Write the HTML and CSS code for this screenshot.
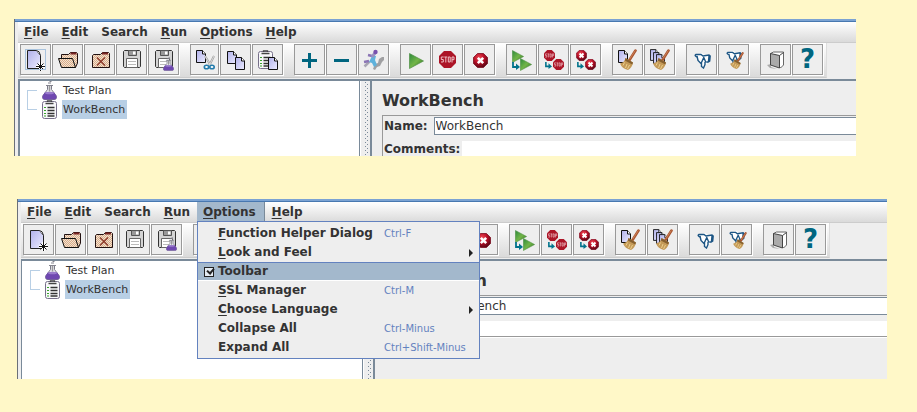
FILE: index.html
```html
<!DOCTYPE html>
<html lang="en">
<head>
<meta charset="utf-8">
<title>WorkBench</title>
<link rel="stylesheet" href="styles.css">
</head>
<body>
<svg class="sprite" aria-hidden="true">
  <defs>
    <linearGradient id="lilac" x1="0" y1="0" x2="1" y2="1"><stop offset="0" stop-color="#b0b0ea"/><stop offset="1" stop-color="#ececff"/></linearGradient>
    <linearGradient id="green" x1="0" y1="0" x2="1" y2="1"><stop offset="0" stop-color="#2c8a3c"/><stop offset=".5" stop-color="#72b548"/><stop offset="1" stop-color="#2c6e20"/></linearGradient>
    <radialGradient id="red" cx=".4" cy=".3" r=".7"><stop offset="0" stop-color="#f04a55"/><stop offset=".55" stop-color="#b40d25"/><stop offset="1" stop-color="#5c0716"/></radialGradient>
    <pattern id="tan" width="2" height="2" patternUnits="userSpaceOnUse"><rect width="2" height="2" fill="#f3e2d0"/><rect width="1" height="1" fill="#d8ac8a"/><rect x="1" y="1" width="1" height="1" fill="#d8ac8a"/></pattern>
    <symbol id="page" viewBox="0 0 10 13"><path d="M.5.5h6l3 3.500v8.500h-9z" fill="url(#lilac)" stroke="#111"/><path d="M6.500.5v3.500h3" fill="#fff" stroke="#111"/></symbol>
    <symbol id="flask" viewBox="0 0 15 19"><path d="M5.500 4.500v4L1 14.500q-1.500 4 2 4h9q3.500 0 2-4L9.500 8.500v-4z" fill="#e9e9f0" stroke="#7b7b88"/><path d="M2.800 11.500h9.400l2.300 3.500q.5 3.500-2.500 3.500H3Q0 18.500.5 15z" fill="#6f48b0"/><ellipse cx="7.500" cy="12" rx="4.500" ry="1.300" fill="#9a7ccc"/><path d="M4 4.500h7M6 2h3M7.500.5h2" stroke="#84848e" fill="none"/><path d="M7.500 5v5.500" stroke="#999" stroke-width="1.500"/></symbol>
    <symbol id="clip" viewBox="0 0 15 19"><rect x=".5" y="1.500" width="14" height="17" rx="2" fill="#f8f8fa" stroke="#77708a"/><path d="M3.500 3.500h8M5.500 2V.8h4V2" stroke="#444" stroke-width="1.300" fill="none"/><path d="M5.500 7.500h7M5.500 10.500h7M5.500 13.500h7M5.500 16h7" stroke="#333" stroke-width="1.300"/><path d="M2 7.500h2M2 10.500h2M2 13.500h2M2 16h2" stroke="#37a32a"/></symbol>
    <symbol id="disk" viewBox="0 0 18 18"><path d="M.5 1.500l1-1h15l1 1v15l-1 1h-15l-1-1z" fill="#d4d4d4" stroke="#333"/><path d="M5.500.5h8v5h-8z" fill="#999" stroke="#555"/><path d="M10 1.500h2.500v3H10z" fill="#fff"/><path d="M3.500 8.500h11v9h-11z" fill="#fff" stroke="#666"/><path d="M5 11.500h8M5 14.500h8" stroke="#bbb"/></symbol>
    <symbol id="broom" viewBox="0 0 17 21"><path d="M15.500 1.500L9.500 11" stroke="#a9552f" stroke-width="2.600" stroke-linecap="round"/><path d="M15.300 1.500L9.700 10" stroke="#d58b62" stroke-width=".8"/><path d="M5.500 9l7.500 4.500q-1 5.500-5 7.500Q2 19.500 0 14.500 4.500 13.500 5.500 9z" fill="#c49a58"/><path d="M5.500 9l7.500 4.500-.7 2-7.500-4z" fill="#86602f"/><path d="M4.500 13.500l-1.500 3M7 15l-1.500 4M9.500 16l-2 4" stroke="#ecd08d"/></symbol>
    <symbol id="glass" viewBox="0 0 17 17"><path d="M2.500 5.500L1 3.500 3 2.500l5-1.500 3 2h5v6l-2.500 1.500-3 5-2 .5L7 11 4 7z" fill="#fff"/><path d="M3 5Q0 3.500 2 2.500h5l2 1.500 6-1 1.200 1-.5 5-2.200 1.500M3 4l1 4.500 3 3L10 5M10 6l1.500 3.500q2 1.500 3-.5l.5-5M7.500 11v3.500l2 1.500 1.500-3.500V10" fill="none" stroke="#1c5584" stroke-width="1.400"/></symbol>
    <symbol id="bend" viewBox="0 0 8 8"><path d="M1 0v5h4" fill="none" stroke="#00738c" stroke-width="1.800"/><path d="M4 1.500l4 3.500-4 3z" fill="#00738c"/></symbol>
    <symbol id="tri" viewBox="0 0 15 16"><path d="M.5.5l14 7.500-14 7.500z" fill="url(#green)" stroke="#4f8f45" stroke-width=".7"/></symbol>
    <symbol id="stopsign" viewBox="0 0 17 17"><path d="M5 0h7l5 5v7l-5 5H5l-5-5V5z" fill="#ac1527"/><path d="M4.700 6H2.300v2.500h2v2.500H2M5.300 6h3M6.800 6v5.500M9.300 6h1.900v5H9.300zM13 11.500V6h2v2.700h-2" fill="none" stroke="#eec0c5"/></symbol>
    <symbol id="kill" viewBox="0 0 15 15"><path d="M4.500.5h6l4 4v6l-4 4h-6l-4-4v-6z" fill="url(#red)" stroke="#7c0c20" stroke-width=".8"/><path d="M4.800 4.800l5.400 5.400M10.200 4.800l-5.400 5.400" stroke="#fff" stroke-width="2.600"/></symbol>

    <symbol id="i-new" viewBox="0 0 29 29"><path d="M6.500 5.500h9l4 5v13h-13z" fill="url(#lilac)" stroke="#222"/><path d="M15.500 5.500q3 0 4 5" fill="#fff" stroke="#222"/><path d="M19.500 17v9M15 21.500h9" stroke="#fff" stroke-width="3"/><path d="M19.500 17v9M15 21.500h9M16.500 18.500l6 6M22.500 18.500l-6 6" stroke="#111"/></symbol>
    <symbol id="i-open" viewBox="0 0 29 29"><path d="M8.500 13v-3.500h7l2-2h6l1 1V18l-2 4.500z" fill="url(#tan)" stroke="#211"/><path d="M17.500 8.500h6" stroke="#7a2524" stroke-width="2"/><path d="M5.500 13.500h14l3 9H8.500z" fill="url(#tan)" stroke="#111"/></symbol>
    <symbol id="i-close" viewBox="0 0 29 29"><path d="M7.500 22.500v-12l1-1h7l2-2h6l1 1v14z" fill="url(#tan)" stroke="#211"/><path d="M17 8.500h6" stroke="#7a2524" stroke-width="2"/><path d="M12 12.500l8 8M20 12.500l-8 8" stroke="#8a3324" stroke-width="1.200"/></symbol>
    <symbol id="i-save" viewBox="0 0 29 29"><use href="#disk" x="6" y="5" width="18" height="18"/></symbol>
    <symbol id="i-saveas" viewBox="0 0 29 29"><use href="#disk" x="6" y="5" width="18" height="18"/><use href="#flask" x="14" y="12" width="11" height="14"/></symbol>
    <symbol id="i-cut" viewBox="0 0 29 29"><use href="#page" x="5" y="5" width="10" height="13"/><path d="M14 11l6 10M23 11l-5 10" stroke="#999" stroke-width="2"/><path d="M14 11l6 10M23 11l-5 10" stroke="#eee" stroke-width=".8"/><ellipse cx="15.500" cy="22" rx="2.200" ry="1.800" fill="#fff" stroke="#247cac" stroke-width="1.600"/><ellipse cx="21" cy="22" rx="2.200" ry="1.800" fill="#fff" stroke="#247cac" stroke-width="1.600"/></symbol>
    <symbol id="i-copy" viewBox="0 0 29 29"><use href="#page" x="6" y="6" width="10" height="13"/><use href="#page" x="14" y="12" width="10" height="13"/></symbol>
    <symbol id="i-paste" viewBox="0 0 29 29"><use href="#clip" x="5" y="5" width="15" height="19"/><use href="#page" x="15" y="12" width="10" height="13"/></symbol>
    <symbol id="i-plus" viewBox="0 0 29 29"><path d="M14.500 8v15M7 15.500h15" stroke="#006680" stroke-width="3"/></symbol>
    <symbol id="i-minus" viewBox="0 0 29 29"><path d="M7 15.500h15" stroke="#006680" stroke-width="3"/></symbol>
    <symbol id="i-toggle" viewBox="0 0 29 29"><path d="M14 24l2-5 3-1 1-4 3-2h2v3l-2 2-2 4-3 1-2 3z" fill="#a0a0a2"/><path d="M5.500 21.500l5-5" stroke="#a8a6b4" stroke-width="2.500"/><path d="M5 17l5-1M9 10l6 1.500" stroke="#8b74b5" stroke-width="2.500"/><path d="M10 17l3-6h4l-1 4 2 5-3 2-2-4z" fill="#5fb2dc"/><path d="M13 12l3-4" stroke="#9b91c0" stroke-width="3"/><circle cx="16.500" cy="7" r="2.200" fill="#7851ae"/></symbol>
    <symbol id="i-play" viewBox="0 0 29 29"><use href="#tri" x="8" y="8" width="15" height="16"/></symbol>
    <symbol id="i-stop" viewBox="0 0 29 29"><use href="#stopsign" x="6" y="6" width="17" height="17"/></symbol>
    <symbol id="i-kill" viewBox="0 0 29 29"><use href="#kill" x="8" y="8" width="15" height="15"/></symbol>
    <symbol id="i-playall" viewBox="0 0 29 29"><use href="#tri" x="5" y="5" width="12" height="13"/><use href="#tri" x="13" y="13" width="12" height="13"/><use href="#bend" x="5" y="17" width="8" height="8"/></symbol>
    <symbol id="i-stopall" viewBox="0 0 29 29"><use href="#stopsign" x="5" y="5" width="11" height="11"/><use href="#stopsign" x="14" y="14" width="11" height="11"/><use href="#bend" x="6" y="17" width="7" height="7"/></symbol>
    <symbol id="i-killall" viewBox="0 0 29 29"><use href="#kill" x="5" y="5" width="11" height="11"/><use href="#kill" x="14" y="14" width="11" height="11"/><use href="#bend" x="6" y="17" width="7" height="7"/></symbol>
    <symbol id="i-clear" viewBox="0 0 29 29"><use href="#page" x="5" y="5" width="10" height="13"/><use href="#broom" x="7" y="4" width="17" height="21"/></symbol>
    <symbol id="i-clearall" viewBox="0 0 29 29"><use href="#page" x="5" y="4" width="9" height="12"/><use href="#page" x="8" y="7" width="9" height="12"/><use href="#page" x="11" y="9" width="9" height="12"/><use href="#broom" x="8" y="4" width="17" height="21"/></symbol>
    <symbol id="i-find" viewBox="0 0 29 29"><use href="#glass" x="7" y="7" width="17" height="17"/></symbol>
    <symbol id="i-reset" viewBox="0 0 29 29"><use href="#glass" x="7" y="5" width="16" height="16"/><use href="#broom" x="11" y="7" width="14" height="17"/></symbol>
    <symbol id="i-func" viewBox="0 0 29 29"><path d="M6 20l4-1v3l6 2-7-1z" fill="#aaa"/><path d="M9.500 8.500l3-1.500h10v13l-3 3z" fill="#fff" stroke="#666"/><path d="M9.500 8.500l9 2v12.500l-9-3z" fill="#aaa" stroke="#444"/><path d="M18.500 10.500l4-3" stroke="#444"/></symbol>
  </defs>
</svg>

<main>
<section class="window first" aria-label="Toolbar shown">
  <nav class="menubar">
    <button><u>F</u>ile</button><button><u>E</u>dit</button><button>Search</button><button><u>R</u>un</button><button><u>O</u>ptions</button><button><u>H</u>elp</button>
  </nav>
  <div class="toolrow"><div class="toolbar">
    <div class="group">
      <button class="focused" aria-label="New"><svg><use href="#i-new"/></svg></button>
      <button aria-label="Open"><svg><use href="#i-open"/></svg></button>
      <button aria-label="Close"><svg><use href="#i-close"/></svg></button>
      <button aria-label="Save"><svg><use href="#i-save"/></svg></button>
      <button aria-label="Save as"><svg><use href="#i-saveas"/></svg></button>
    </div>
    <div class="group">
      <button class="narrow" aria-label="Cut"><svg><use href="#i-cut"/></svg></button>
      <button aria-label="Copy"><svg><use href="#i-copy"/></svg></button>
      <button aria-label="Paste"><svg><use href="#i-paste"/></svg></button>
    </div>
    <div class="group">
      <button aria-label="Expand"><svg><use href="#i-plus"/></svg></button>
      <button aria-label="Collapse"><svg><use href="#i-minus"/></svg></button>
      <button aria-label="Toggle"><svg><use href="#i-toggle"/></svg></button>
    </div>
    <div class="group">
      <button aria-label="Start"><svg><use href="#i-play"/></svg></button>
      <button aria-label="Stop"><svg><use href="#i-stop"/></svg></button>
      <button aria-label="Shutdown"><svg><use href="#i-kill"/></svg></button>
    </div>
    <div class="group">
      <button aria-label="Remote start all"><svg><use href="#i-playall"/></svg></button>
      <button aria-label="Remote stop all"><svg><use href="#i-stopall"/></svg></button>
      <button aria-label="Remote shutdown all"><svg><use href="#i-killall"/></svg></button>
    </div>
    <div class="group">
      <button aria-label="Clear"><svg><use href="#i-clear"/></svg></button>
      <button aria-label="Clear all"><svg><use href="#i-clearall"/></svg></button>
    </div>
    <div class="group">
      <button aria-label="Search"><svg><use href="#i-find"/></svg></button>
      <button aria-label="Reset search"><svg><use href="#i-reset"/></svg></button>
    </div>
    <div class="group">
      <button aria-label="Function helper"><svg><use href="#i-func"/></svg></button>
      <button class="help" aria-label="Help">?</button>
    </div>
  </div></div>
  <div class="workspace">
    <div class="tree">
      <span class="branch"></span>
      <ul>
        <li><svg><use href="#flask"/></svg><span>Test Plan</span></li>
        <li class="selected"><svg><use href="#clip"/></svg><span>WorkBench</span></li>
      </ul>
    </div>
    <div class="splitter"></div>
    <div class="panel">
      <h1>WorkBench</h1>
      <form class="fields">
        <div class="row name"><label for="name1">Name:</label><input id="name1" type="text" value="WorkBench"></div>
        <div class="row comments"><label for="com1">Comments:</label><input id="com1" type="text"></div>
      </form>
    </div>
  </div>
</section>

<section class="window second" aria-label="Options menu open">
  <nav class="menubar">
    <button><u>F</u>ile</button><button><u>E</u>dit</button><button>Search</button><button><u>R</u>un</button>
    <div class="open">
      <button aria-expanded="true"><u>O</u>ptions</button>
      <div class="popup">
        <button><span><u>F</u>unction Helper Dialog</span><kbd>Ctrl-F</kbd></button>
        <button class="sub"><span><u>L</u>ook and Feel</span></button>
        <label class="active"><input type="checkbox" checked><span>Toolbar</span></label>
        <button><span><u>S</u>SL Manager</span><kbd>Ctrl-M</kbd></button>
        <button class="sub"><span><u>C</u>hoose Language</span></button>
        <button><span>Collapse All</span><kbd>Ctrl-Minus</kbd></button>
        <button><span>Expand All</span><kbd>Ctrl+Shift-Minus</kbd></button>
      </div>
    </div>
    <button><u>H</u>elp</button>
  </nav>
  <div class="toolrow"><div class="toolbar">
    <div class="group">
      <button aria-label="New"><svg><use href="#i-new"/></svg></button>
      <button aria-label="Open"><svg><use href="#i-open"/></svg></button>
      <button aria-label="Close"><svg><use href="#i-close"/></svg></button>
      <button aria-label="Save"><svg><use href="#i-save"/></svg></button>
      <button aria-label="Save as"><svg><use href="#i-saveas"/></svg></button>
    </div>
    <div class="group">
      <button class="narrow" aria-label="Cut"><svg><use href="#i-cut"/></svg></button>
      <button aria-label="Copy"><svg><use href="#i-copy"/></svg></button>
      <button aria-label="Paste"><svg><use href="#i-paste"/></svg></button>
    </div>
    <div class="group">
      <button aria-label="Expand"><svg><use href="#i-plus"/></svg></button>
      <button aria-label="Collapse"><svg><use href="#i-minus"/></svg></button>
      <button aria-label="Toggle"><svg><use href="#i-toggle"/></svg></button>
    </div>
    <div class="group">
      <button aria-label="Start"><svg><use href="#i-play"/></svg></button>
      <button aria-label="Stop"><svg><use href="#i-stop"/></svg></button>
      <button aria-label="Shutdown"><svg><use href="#i-kill"/></svg></button>
    </div>
    <div class="group">
      <button aria-label="Remote start all"><svg><use href="#i-playall"/></svg></button>
      <button aria-label="Remote stop all"><svg><use href="#i-stopall"/></svg></button>
      <button aria-label="Remote shutdown all"><svg><use href="#i-killall"/></svg></button>
    </div>
    <div class="group">
      <button aria-label="Clear"><svg><use href="#i-clear"/></svg></button>
      <button aria-label="Clear all"><svg><use href="#i-clearall"/></svg></button>
    </div>
    <div class="group">
      <button aria-label="Search"><svg><use href="#i-find"/></svg></button>
      <button aria-label="Reset search"><svg><use href="#i-reset"/></svg></button>
    </div>
    <div class="group">
      <button aria-label="Function helper"><svg><use href="#i-func"/></svg></button>
      <button class="help" aria-label="Help">?</button>
    </div>
  </div></div>
  <div class="workspace">
    <div class="tree">
      <span class="branch"></span>
      <ul>
        <li><svg><use href="#flask"/></svg><span>Test Plan</span></li>
        <li class="selected"><svg><use href="#clip"/></svg><span>WorkBench</span></li>
      </ul>
    </div>
    <div class="splitter"></div>
    <div class="panel">
      <h1>WorkBench</h1>
      <form class="fields closed">
        <div class="row name"><label for="name2">Name:</label><input id="name2" type="text" value="WorkBench"></div>
        <div class="row comments"><label for="com2">Comments:</label><input id="com2" type="text"></div>
      </form>
    </div>
  </div>
</section>
</main>
</body>
</html>
```
FILE: styles.css
```css
* { box-sizing: border-box; }

body {
  margin: 0;
  background: #fff8c8;
  color: #333;
  font: bold 12px/16px "DejaVu Sans", sans-serif;
}

button, input { font: inherit; color: inherit; margin: 0; }
u { text-underline-offset: 2px; text-decoration-thickness: 1px; }
.sprite { position: absolute; width: 0; height: 0; }

main {
  display: flex;
  flex-direction: column;
  gap: 43px;
  padding: 19px 30px 33px 14px;
}

.window {
  background: #eee;
  border-left: 1px solid #6b7078;
  padding-left: 3px;
}
.window::before {
  content: "";
  display: block;
  height: 3px;
  margin-left: -3px;
  background: linear-gradient(#7ba3d3 2px, #4878b0 2px);
}
.first { margin-right: 31px; }
.second { margin-left: 3px; }

/* menu bar */
.menubar {
  display: flex;
  gap: 1px;
  height: 21px;
  border-bottom: 1px solid #ccc;
  background: linear-gradient(#fff, #dadada);
}
.menubar button {
  height: 20px;
  padding: 0 6px;
  border: 0;
  background: none;
  line-height: 19px;
  text-align: left;
  white-space: nowrap;
}
.open { position: relative; }
.menubar .open > button { padding-right: 8px; background: #a3b8cc; border-right: 1px solid #7a8a99; }

.popup {
  position: absolute;
  z-index: 2;
  top: 19px;
  left: 0;
  width: 283px;
  padding: 2px 0 1px;
  border: 1px solid #6382bf;
  background: #eee;
}
.menubar .popup > * {
  display: grid;
  grid-template-columns: 166px 1fr;
  align-items: center;
  width: 100%;
  height: 19px;
  padding: 0 8px 0 20px;
  line-height: 19px;
}
.popup kbd { font: 10px/19px "DejaVu Sans", sans-serif; color: #6382bf; }
.menubar .popup .sub { grid-template-columns: 1fr 4px; padding-right: 6px; }
.popup .sub::after {
  content: "";
  border: 4px solid transparent;
  border-right: 0;
  border-left-color: #222;
}
.menubar .popup .active {
  grid-template-columns: 9px 1fr;
  gap: 5px;
  padding-left: 6px;
  background: #a3b8cc;
  box-shadow: inset 0 1px #6382bf, inset 0 -1px #fff;
}
.active input {
  appearance: none;
  position: relative;
  width: 10px;
  height: 10px;
  border: 1px solid #222;
  background: #e4ebf2;
}
.active input::after {
  content: "";
  position: absolute;
  left: 2px;
  top: 0;
  width: 5px;
  height: 3px;
  border: solid #222;
  border-width: 0 0 2px 2px;
  transform: rotate(-50deg);
}

/* toolbar */
.toolrow { display: flex; height: 36px; }
.toolbar {
  display: flex;
  gap: 10px;
  height: 35px;
  padding: 1px 2px;
  border-right: 1px solid #ddd;
  border-bottom: 1px solid #ccc;
  background: linear-gradient(#fff, #dadada);
}
.group { display: flex; gap: 1px; padding-right: 1px; }
.group button {
  display: flex;
  align-items: center;
  justify-content: center;
  width: 31px;
  height: 31px;
  padding: 0;
  border: 1px solid #999;
  background: #eee;
  box-shadow: 1px 1px #fff;
}
.group .narrow { width: 29px; justify-content: flex-start; }
.group svg { flex: none; width: 29px; height: 29px; }
.focused svg { outline: 1px solid #a9c3dd; outline-offset: -5px; }
.group .help { color: #006680; font-size: 26px; line-height: 29px; }

/* workspace */
.workspace {
  display: flex;
  min-height: 77px;
  border-top: 2px solid #7a8a99;
}
.second .workspace { min-height: 120px; }

.tree {
  display: flex;
  flex: none;
  gap: 5px;
  width: 342px;
  padding-left: 7px;
  border: solid #7a8a99;
  border-width: 0 1px 0 2px;
  background: #fff;
  font-size: 11px;
  font-weight: normal;
}
.second .tree { border-left-width: 1px; padding-left: 8px; }
.branch {
  width: 10px;
  height: 20px;
  margin-top: 9px;
  border: 1px solid #b8cfe5;
  border-right: 0;
}
.tree ul { margin: 0; padding: 0; list-style: none; }
.tree li { display: flex; gap: 5px; height: 19px; line-height: 19px; }
.tree svg { width: 15px; height: 19px; }
.tree span { padding: 0 2px 0 1px; }
.selected span { background: #b8cfe5; }

.splitter {
  flex: none;
  width: 10px;
  border-left: 1px solid #fff;
  background:
    conic-gradient(from 0deg at 1px 1px, transparent 75%, #7a8a99 0) 4px 1px / 4px 4px repeat-y,
    conic-gradient(from 0deg at 1px 1px, transparent 75%, #7a8a99 0) 6px 3px / 4px 4px repeat-y,
    #eee;
}

.panel {
  flex: 1;
  min-width: 0;
  padding: 10px 0 0 10px;
  border-left: 2px solid #7a8a99;
}
.panel h1 { margin: 0 0 4px; font-size: 16px; line-height: 20px; }
.fields {
  display: grid;
  gap: 6px;
  padding: 1px 0 0 1px;
  border: solid #999;
  border-width: 1px 0 0 1px;
}
.closed { border-bottom-width: 1px; box-shadow: 0 1px #fff; }
.row { display: flex; }
.row input {
  flex: 1;
  min-width: 0;
  padding: 0 1px;
  border: 0;
  border-radius: 0;
  background: #fff;
  font-weight: normal;
}
.name { height: 18px; gap: 6px; line-height: 18px; }
.name input { border: 1px solid #7a8a99; border-right: 0; }
.comments { height: 15px; gap: 2px; line-height: 16px; }
```
